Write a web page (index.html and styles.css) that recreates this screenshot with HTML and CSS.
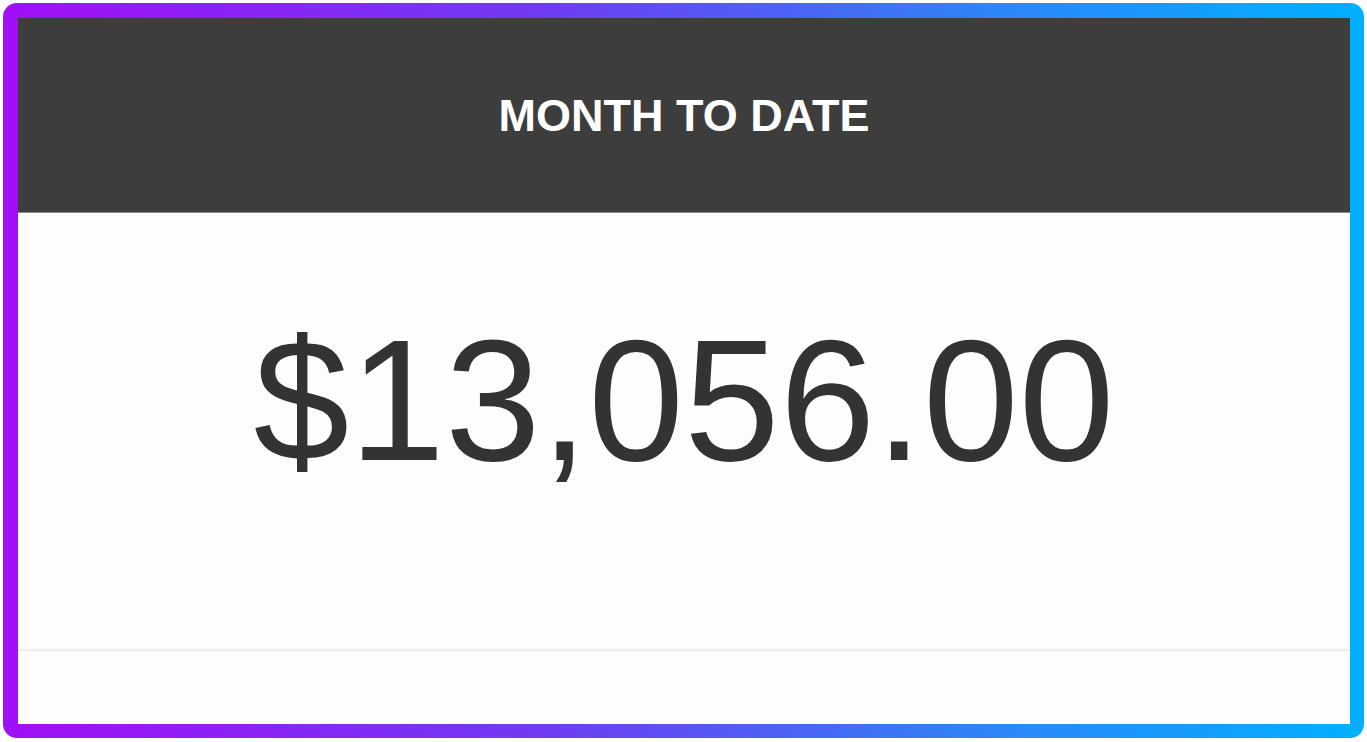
FILE: index.html
```html
<!DOCTYPE html>
<html lang="en">
<head>
    <meta charset="UTF-8">
    <meta name="viewport" content="width=device-width, initial-scale=1.0">
    <title>Month to date</title>
    <link rel="stylesheet" href="styles.css">
</head>
<body>
    <div class="frame">
        <div class="card">
            <div class="card-head">
                <h1>MONTH TO DATE</h1>
            </div>
            <div class="card-body">
                <p class="amount">$13,056.00</p>
            </div>
            <div class="card-foot"></div>
        </div>
    </div>
</body>
</html>
```

FILE: styles.css
```css
html, body {
    margin: 0;
    padding: 0;
    background-color: #ffffff;
}
body {
    font-family: "Liberation Sans", Arial, sans-serif;
    padding: 3px;
    width: 1361px;
    height: 735px;
}
.frame {
    box-sizing: border-box;
    width: 1361px;
    height: 735px;
    padding: 15px 14px 14px 15px;
    border-radius: 14px;
    background: linear-gradient(90deg, #a10ff7 0%, #6f3cf2 40%, #2a8af8 75%, #00b0ff 100%);
}
.card {
    display: flex;
    flex-direction: column;
    height: 100%;
    background-color: #fdfdfd;
}
.card-head {
    display: flex;
    align-items: center;
    justify-content: center;
    height: 194px;
    background-color: #3d3d3d;
    border-bottom: 1px solid #8a8a8a;
}
.card-head h1 {
    margin: 2px 0 0 0;
    color: #ffffff;
    font-size: 45px;
    font-weight: bold;
}
.card-body {
    height: 436px;
    box-sizing: border-box;
    padding-top: 88px;
}
.amount {
    margin: 0;
    text-align: center;
    color: #333333;
    font-size: 172px;
}
.card-foot {
    flex: 1;
    border-top: 2px solid #eeeeee;
}
```
